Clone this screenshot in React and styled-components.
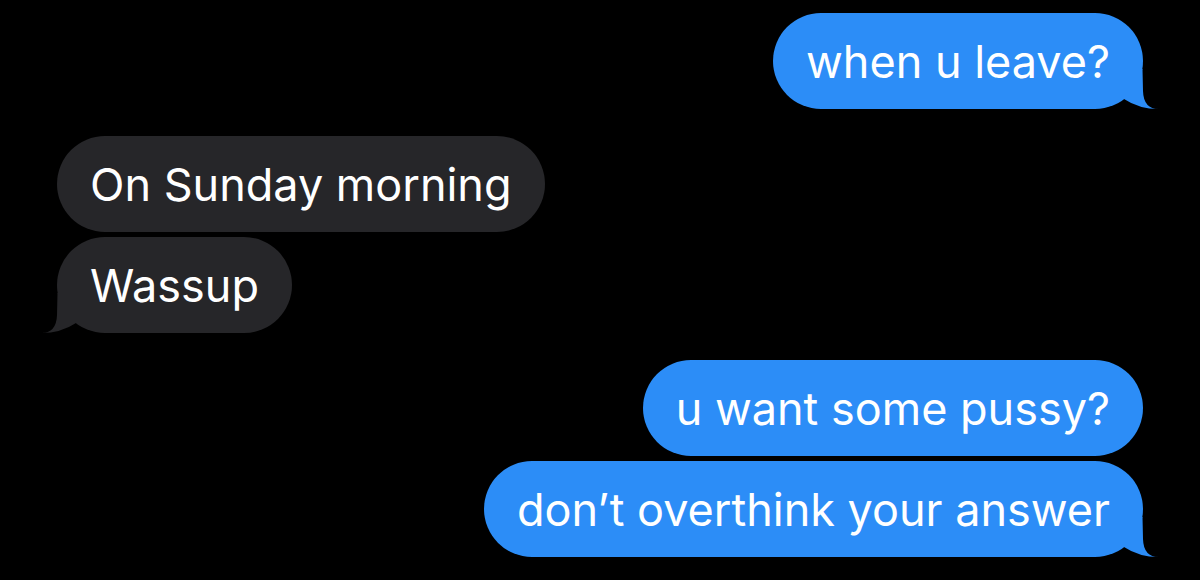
import React from "react";
import styled, { createGlobalStyle } from "styled-components";

const Global = createGlobalStyle`
  html, body { margin: 0; padding: 0; background: #000; }
  body { font-family: Inter, "Liberation Sans", Arial, sans-serif; }
`;

const Thread = styled.div`
  width: 1200px;
  height: 580px;
  box-sizing: border-box;
  padding: 13px 57px 0;
  display: flex;
  flex-direction: column;
  gap: 27px;
  background: #000;
  overflow: hidden;
`;

const Group = styled.div`
  display: flex;
  flex-direction: column;
  gap: 5px;
  align-items: ${(p) => (p.$sent ? "flex-end" : "flex-start")};
`;

const Bubble = styled.div`
  position: relative;
  box-sizing: border-box;
  height: 96px;
  padding: 23px 33px 21px 33px;
  border-radius: 48px;
  background: ${(p) => (p.$sent ? "#2c8df7" : "#262629")};
  color: #fff;
  font-size: 45px;
  line-height: 52px;
  letter-spacing: 0;
  white-space: nowrap;
`;

const Tail = styled.svg`
  position: absolute;
  bottom: 0;
  width: 46px;
  height: 40px;
  ${(p) =>
    p.$sent
      ? "right: -16px;"
      : "left: -16px; transform: scaleX(-1);"}
`;

function BubbleTail({ sent, color }) {
  return (
    <Tail $sent={sent} viewBox="0 0 46 40" aria-hidden="true">
      <path
        d="M0 0 L29.5 0 L30 22 Q30.5 40 46 40 Q26 40 11 30 L0 20 Z"
        fill={color}
      />
    </Tail>
  );
}

function Message({ sent, tail, children }) {
  return (
    <Bubble $sent={sent}>
      {children}
      {tail && <BubbleTail sent={sent} color={sent ? "#2c8df7" : "#262629"} />}
    </Bubble>
  );
}

export default function App() {
  return (
    <>
      <Global />
      <Thread>
        <Group $sent>
          <Message sent tail>when u leave?</Message>
        </Group>
        <Group>
          <Message>On Sunday morning</Message>
          <Message tail>Wassup</Message>
        </Group>
        <Group $sent>
          <Message sent>u want some pussy?</Message>
          <Message sent tail>don’t overthink your answer</Message>
        </Group>
      </Thread>
    </>
  );
}
